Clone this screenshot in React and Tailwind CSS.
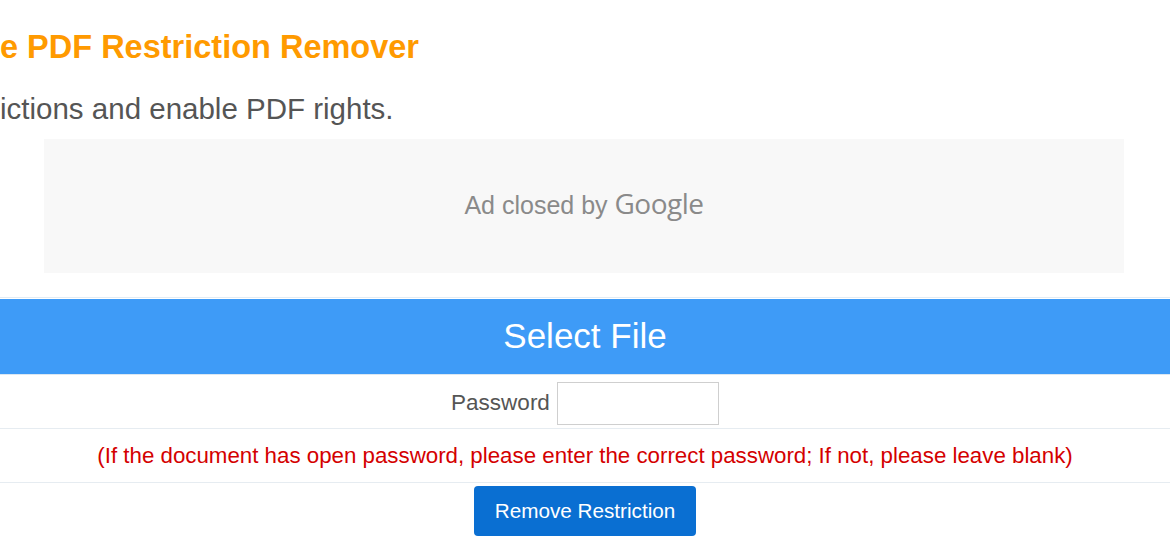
const App = () => {
    return (
        <div className="w-[1170px] h-[550px] overflow-hidden bg-white font-['Liberation_Sans',Arial,sans-serif]">
            {/* heading */}
            <h1 className="pt-[29px] text-[32.5px] leading-[36px] font-bold text-[#ff9a00] whitespace-nowrap">
                e PDF Restriction Remover
            </h1>
            <p className="mt-[28px] text-[29.5px] leading-[32px] text-[#555] whitespace-nowrap">
                ictions and enable PDF rights.
            </p>

            {/* closed ad */}
            <div className="ml-[44px] mt-[14px] w-[1080px] h-[134px] pb-[6px] bg-[#f8f8f8] flex items-center justify-center">
                <span className="text-[25px] text-[#8a8a8a]">
                    Ad closed by <span className="font-['Open_Sans',sans-serif] text-[28px] tracking-[-0.5px]">Google</span>
                </span>
            </div>

            {/* form */}
            <div className="mt-[24px] border-t border-[#e2ebf3]">
                <div className="mt-[1px] h-[76px] bg-[#3e9bf7] flex items-center justify-center border-b border-[#dbe7f2]">
                    <span className="text-[35px] text-white">Select File</span>
                </div>
                <div className="h-[54px] pt-[3px] flex items-center justify-center gap-[7px] border-b border-[#e6ecf1]">
                    <label className="text-[22.5px] text-[#555]">Password</label>
                    <input type="password" className="w-[162px] h-[43px] border border-[#cfcfcf] bg-white outline-none" />
                </div>
                <div className="h-[54px] flex items-center justify-center border-b border-[#e6ecf1]">
                    <span className="text-[22.3px] text-[#d40000] whitespace-nowrap">
                        (If the document has open password, please enter the correct password; If not, please leave blank)
                    </span>
                </div>
                <div className="pt-[3px] flex justify-center">
                    <button className="w-[222px] h-[50px] rounded-[4px] bg-[#0a6fd2] text-white text-[20.7px]">
                        Remove Restriction
                    </button>
                </div>
            </div>
        </div>
    )
}

export default App
